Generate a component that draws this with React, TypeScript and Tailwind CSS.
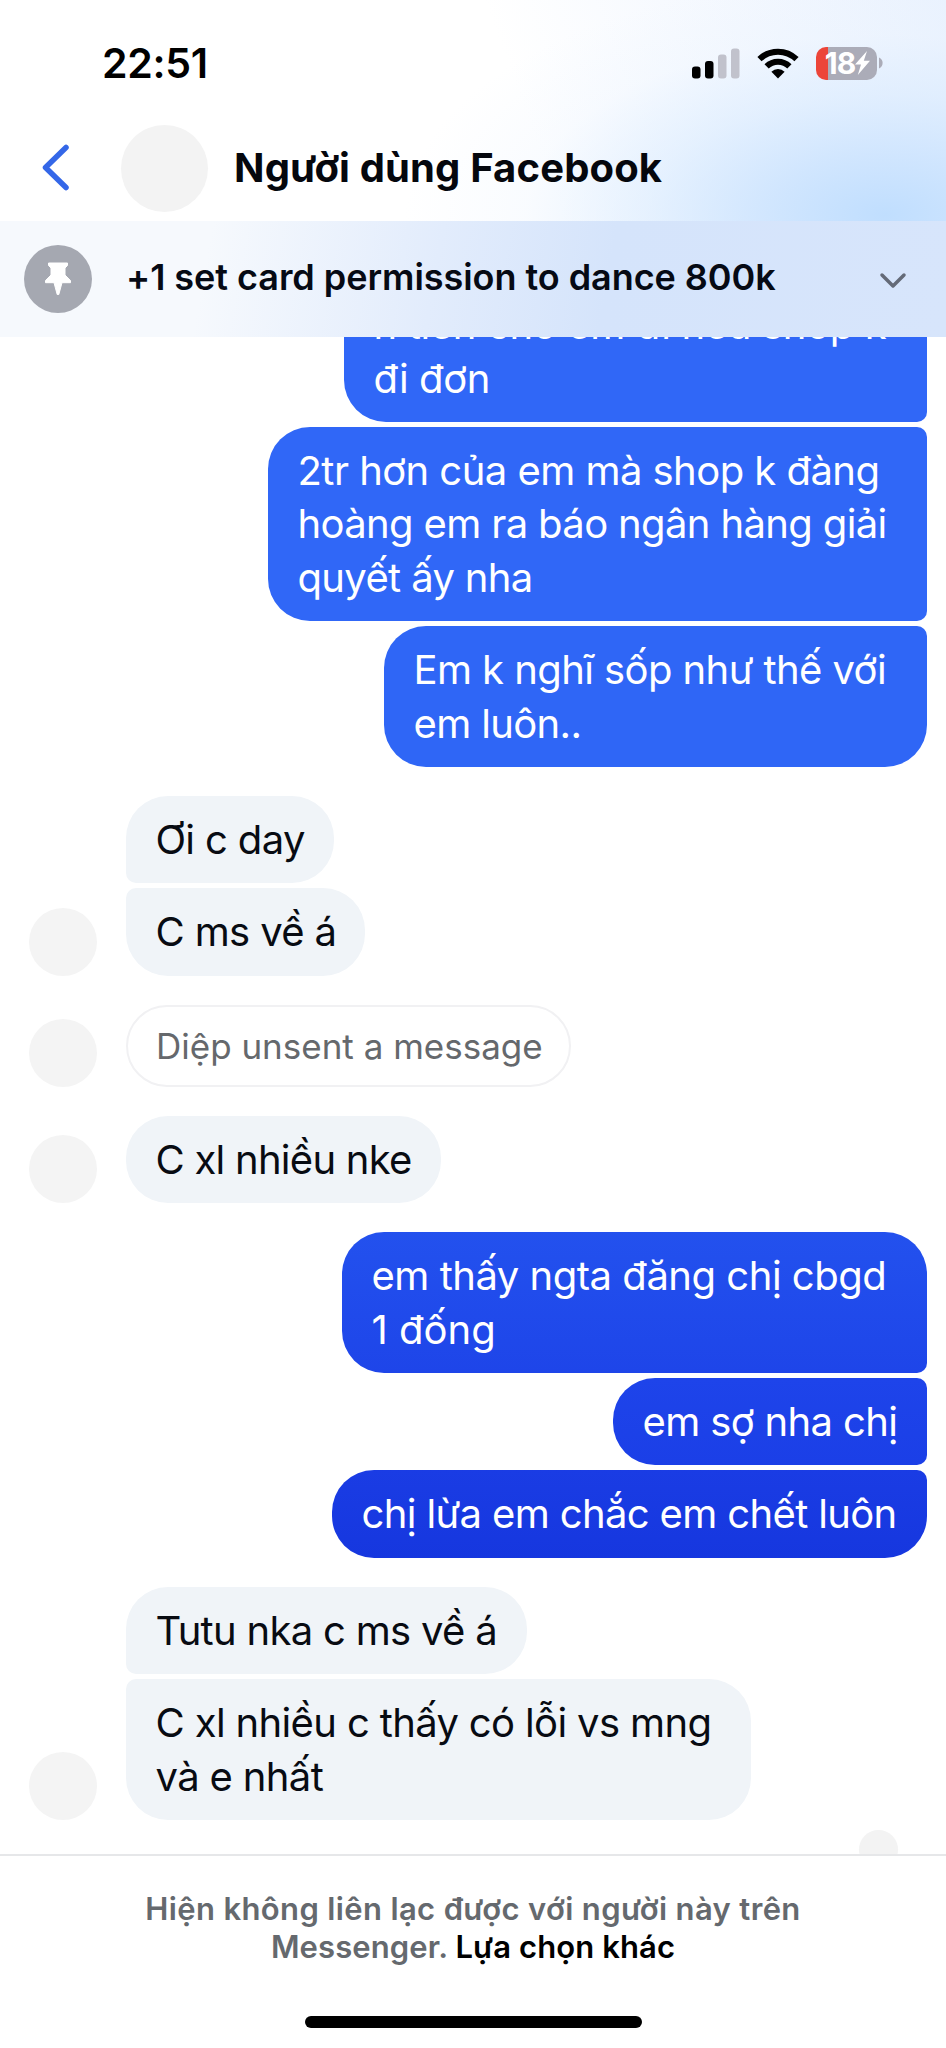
import { clsx } from "clsx";

type Message = {
  lines: { text: string; spacing?: string }[];
  width: string;
  shape: string;
};

const SENT = "rounded-[42px] text-white";
const RECEIVED = "rounded-[42px] bg-[#f0f4f8] text-[#080b12]";

const Avatar = () => (
  <div className="h-[68px] w-[68px] shrink-0 rounded-full bg-[#f4f4f4]" />
);

const Bubble = ({ lines, width, shape }: Message) => (
  <div
    className={clsx(
      "shrink-0 px-[29.5px] pt-[17px] pb-[17px] text-[40px] leading-[53.4px] whitespace-nowrap",
      width,
      shape,
    )}
  >
    {lines.map(({ text, spacing }) => (
      <p key={text} className={spacing ?? "tracking-[-0.64px]"}>
        {text}
      </p>
    ))}
  </div>
);

const Sent = ({ messages }: { messages: Message[] }) => (
  <div className="flex flex-col items-end gap-[5px] pr-[19px]">
    {messages.map((m) => (
      <Bubble key={m.lines[0].text} {...m} shape={clsx(SENT, m.shape)} />
    ))}
  </div>
);

const Received = ({ messages }: { messages: Message[] }) => (
  <div className="flex items-end gap-[29px] pl-[29px]">
    <Avatar />
    <div className="flex flex-col items-start gap-[5px]">
      {messages.map((m) => (
        <Bubble key={m.lines[0].text} {...m} shape={clsx(RECEIVED, m.shape)} />
      ))}
    </div>
  </div>
);

const firstSent: Message[] = [
  {
    lines: [
      { text: "n tiền cho em đi nếu shop k", spacing: "tracking-[-0.35px]" },
      { text: "đi đơn", spacing: "tracking-[-0.4px]" },
    ],
    width: "w-[583px]",
    shape: "bg-[#3067f7] rounded-r-[10px]",
  },
  {
    lines: [
      { text: "2tr hơn của em mà shop k đàng", spacing: "tracking-[-0.54px]" },
      { text: "hoàng em ra báo ngân hàng giải" },
      { text: "quyết ấy nha" },
    ],
    width: "w-[659px]",
    shape: "bg-[#3067f7] rounded-r-[10px]",
  },
  {
    lines: [
      { text: "Em k nghĩ sốp như thế với", spacing: "tracking-[-0.58px]" },
      { text: "em luôn.." },
    ],
    width: "w-[543px]",
    shape: "bg-[#2f66f6] rounded-tr-[10px]",
  },
];

const secondSent: Message[] = [
  {
    lines: [
      { text: "em thấy ngta đăng chị cbgd", spacing: "tracking-[-0.48px]" },
      { text: "1 đống", spacing: "tracking-normal" },
    ],
    width: "w-[585px]",
    shape: "bg-linear-to-b from-[#2351ee] to-[#1e45e9] rounded-br-[10px]",
  },
  {
    lines: [{ text: "em sợ nha chị" }],
    width: "w-[314px]",
    shape: "bg-linear-to-b from-[#1e44ea] to-[#1b3fe7] rounded-r-[10px]",
  },
  {
    lines: [{ text: "chị lừa em chắc em chết luôn" }],
    width: "w-[595px]",
    shape: "bg-linear-to-b from-[#1a3ce4] to-[#1637df] rounded-tr-[10px]",
  },
];

const SignalIcon = () => (
  <svg width="48" height="31" viewBox="0 0 48 31">
    <rect x="0" y="18.5" width="8.5" height="12" rx="3" fill="#000" />
    <rect x="13" y="13" width="8.5" height="17.5" rx="3" fill="#000" />
    <rect x="26" y="6.5" width="8.5" height="24" rx="3" fill="#c1c2cc" />
    <rect x="39" y="0.5" width="8.5" height="30" rx="3" fill="#c1c2cc" />
  </svg>
);

const WifiIcon = () => (
  <svg width="42" height="31" viewBox="0 0 42 31">
    <g fill="none" stroke="#000" strokeWidth="6">
      <path d="M2.5 11.2a26.5 26.5 0 0 1 37 0" />
      <path d="M9.6 18.4a16.3 16.3 0 0 1 22.8 0" />
    </g>
    <path d="M21 30.5l-6.6-6.7a9.4 9.4 0 0 1 13.2 0z" fill="#000" />
  </svg>
);

const BatteryIcon = () => (
  <div className="flex items-center gap-[2px]">
    <div className="flex h-[33px] w-[61px] items-center justify-center rounded-[10px] bg-linear-to-r from-[#ec4539] from-[12px] to-[#abacb8] to-[12px] pl-[2px] text-[30px] leading-none font-bold tracking-[-1px] text-white">
      18
      <svg width="15" height="24" viewBox="0 0 15 24" className="shrink-0">
        <path d="M12 0L0 13.5h6L2.8 24L15 9.8H8.8z" fill="#fff" />
      </svg>
    </div>
    <svg width="4" height="12" viewBox="0 0 4 12">
      <path d="M0 0.5a6 6 0 0 1 0 11z" fill="#abacb8" />
    </svg>
  </div>
);

const Header = () => (
  <header className="h-[221px] bg-[radial-gradient(ellipse_480px_240px_at_885px_215px,#c0defe_0%,#cbe3fed9_25%,#d8eafe99_50%,#e8f2fe40_75%,#ffffff00_100%),linear-gradient(70deg,#ffffff_55%,#eaf2fe_100%)]">
    <div className="flex h-[126px] items-center justify-between pr-[63px] pl-[102px]">
      <span className="text-[41px] leading-none font-semibold tracking-[-0.3px] text-black">
        22:51
      </span>
      <div className="flex items-center gap-[17px]">
        <SignalIcon />
        <WifiIcon />
        <BatteryIcon />
      </div>
    </div>
    <div className="flex h-[84px] items-center pl-[41px]">
      <svg width="29" height="48" viewBox="0 0 29 48">
        <path
          d="M25 3.5L4.5 23.5L25 43.5"
          fill="none"
          stroke="#3467e8"
          strokeWidth="5.5"
          strokeLinecap="round"
          strokeLinejoin="round"
        />
      </svg>
      <div className="ml-[51px] h-[87px] w-[87px] shrink-0 rounded-full bg-[#f3f3f3]" />
      <h1 className="ml-[26px] text-[40px] leading-none font-bold tracking-[0.15px] text-[#05070d]">
        Người dùng Facebook
      </h1>
    </div>
  </header>
);

const PinnedBar = () => (
  <div className="flex h-[116px] items-center bg-[linear-gradient(100deg,#f6f9fd_22%,#e2ecfc_46%,#d5e4fb_64%,#d7e5fb_100%)] pr-[39px] pl-[24px]">
    <div className="flex h-[68px] w-[68px] shrink-0 items-center justify-center rounded-full bg-[#a5a8b1]">
      <svg width="28" height="34" viewBox="0 0 28 34">
        <path
          d="M4.5 1h19v2.5l-2.5 2.5v7l5.5 5.5v2.2h-8.5l-3.2 11.8h-1.6L10 20.7H1.5v-2.2L7 13V6L4.5 3.5z"
          fill="#fff"
          stroke="#fff"
          strokeLinejoin="round"
        />
      </svg>
    </div>
    <p className="ml-[34px] flex-1 pb-[4px] text-[36px] leading-none font-semibold tracking-[-0.05px] whitespace-nowrap text-[#060a14]">
      +1 set card permission to dance 800k
    </p>
    <svg width="28" height="18" viewBox="0 0 28 18" className="mt-[4px]">
      <path
        d="M3 3L14 14L25 3"
        fill="none"
        stroke="#646a77"
        strokeWidth="3.5"
        strokeLinecap="round"
        strokeLinejoin="round"
      />
    </svg>
  </div>
);

export default function App() {
  return (
    <div className="flex h-[2048px] w-[946px] flex-col overflow-hidden bg-white font-['Inter',sans-serif]">
      <Header />
      <PinnedBar />

      <main className="flex h-[1517px] flex-col justify-end gap-[29px] overflow-hidden">
        <Sent messages={firstSent} />
        <Received
          messages={[
            {
              lines: [{ text: "Ơi c day" }],
              width: "w-[208px]",
              shape: "rounded-bl-[10px]",
            },
            {
              lines: [{ text: "C ms về á" }],
              width: "w-[239px]",
              shape: "rounded-tl-[10px]",
            },
          ]}
        />
        <div className="flex items-end gap-[29px] pl-[29px]">
          <Avatar />
          <div className="h-[82px] w-[445px] rounded-full border-2 border-[#f1f1f3] px-[28px] text-[35px] leading-[78px] whitespace-nowrap text-[#65686c]">
            Diệp unsent a message
          </div>
        </div>
        <Received
          messages={[
            {
              lines: [
                { text: "C xl nhiều nke", spacing: "tracking-[-0.74px]" },
              ],
              width: "w-[315px]",
              shape: "",
            },
          ]}
        />
        <Sent messages={secondSent} />
        <Received
          messages={[
            {
              lines: [
                { text: "Tutu nka c ms về á", spacing: "tracking-[-0.7px]" },
              ],
              width: "w-[401px]",
              shape: "rounded-bl-[10px]",
            },
            {
              lines: [
                { text: "C xl nhiều c thấy có lỗi vs mng" },
                { text: "và e nhất" },
              ],
              width: "w-[625px]",
              shape: "rounded-tl-[10px]",
            },
          ]}
        />
        {/* seen indicator, cut off by the footer */}
        <div className="-mt-[19px] flex h-[24px] shrink-0 justify-end overflow-hidden pr-[48px]">
          <div className="h-[39px] w-[39px] rounded-full bg-[#f3f3f3]" />
        </div>
      </main>

      <footer className="flex flex-1 flex-col items-center border-t-2 border-[#e6e7e9] pt-[34px] text-[31px] leading-[37.5px] font-semibold text-[#65696e]">
        <p className="tracking-[0.36px]">
          Hiện không liên lạc được với người này trên
        </p>
        <p className="tracking-[0.1px]">
          Messenger. <span className="text-black">Lựa chọn khác</span>
        </p>
        <div className="mt-auto mb-[20px] h-[12px] w-[337px] rounded-full bg-black" />
      </footer>
    </div>
  );
}
